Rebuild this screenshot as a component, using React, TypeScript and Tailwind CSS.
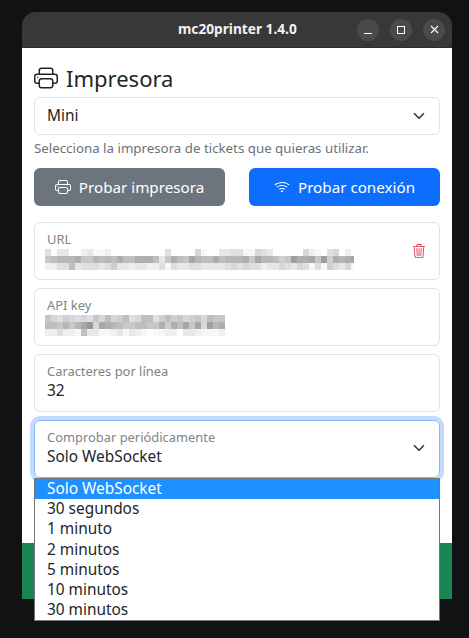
import type { ReactNode } from 'react'
import { BsPrinter, BsWifi, BsTrash3 } from 'react-icons/bs'

// grey levels of the blurred values, one string per row (0 is white, higher is darker)
const urlMosaic = [
  '4033002311200000000040000510033441154300000521045020',
  '78999a779898a88aaa837a87b988a8999a7b99867caab7c6a9ab',
  '2244834443463323322414334433334545442335435414164351',
]
const keyMosaic = [
  '754654547585684588468675675877',
  '887979bd5ba98778877a6a8b7b5c9a',
  '224221833112313210112203321112',
]
const options = ['Solo WebSocket', '30 segundos', '1 minuto', '2 minutos', '5 minutos', '10 minutos', '30 minutos']

function Mosaic({ rows, width }: { rows: string[]; width: number }) {
  return (
    <svg width={width} height={21} className="absolute left-[10px] top-[26px]" shapeRendering="crispEdges">
      {rows.map((row, y) =>
        row.split('').map((c, x) => {
          const g = 255 - (parseInt(c, 16) || 0) * 8
          return <rect key={`${x}-${y}`} x={x * 6} y={y * 7} width={6} height={7} fill={`rgb(${g},${g},${g + 2})`} />
        }),
      )}
    </svg>
  )
}

function Chevron() {
  return (
    <svg width="12" height="12" viewBox="0 0 16 16" fill="none" stroke="#343a40" strokeWidth="2.2" strokeLinecap="round" strokeLinejoin="round">
      <path d="m2 5 6 6 6-6" />
    </svg>
  )
}

function Field({ label, children, right }: { label: string; children?: ReactNode; right?: ReactNode }) {
  return (
    <div className="relative h-[58px] rounded-[6px] border border-[#dee2e6] bg-white px-3 pt-[8px]">
      <div className="text-[12.9px] leading-[17px] text-[#7f8387]">{label}</div>
      {children}
      {right}
    </div>
  )
}

export default function App() {
  return (
    <div className="relative h-[638px] w-[469px] overflow-hidden bg-[#111214] font-['Noto_Sans',sans-serif] text-[#212529]">
      <div className="pl-[22px] pt-3">
        <div className="flex h-[587px] w-[430px] flex-col overflow-hidden rounded-t-[14px]">
          <div className="flex h-[36px] shrink-0 items-center border-b border-[#2c2c2c] bg-[#383838] pl-[156px] pr-[7px]">
            <div className="text-[13.7px] font-bold text-[#f2f2f2]">mc20printer 1.4.0</div>
            <div className="ml-auto flex gap-[11px]">
              <div className="flex h-[22px] w-[22px] items-center justify-center rounded-full bg-[#4a4a4a]">
                <div className="mt-[8px] h-[1px] w-2 bg-white" />
              </div>
              <div className="flex h-[22px] w-[22px] items-center justify-center rounded-full bg-[#4a4a4a]">
                <div className="h-2 w-2 border border-white" />
              </div>
              <div className="flex h-[22px] w-[22px] items-center justify-center rounded-full bg-[#4a4a4a]">
                <svg width="9" height="9" viewBox="0 0 9 9" stroke="white" strokeWidth="1.1">
                  <path d="M1 1l7 7M8 1l-7 7" />
                </svg>
              </div>
            </div>
          </div>

          <div className="flex-1 bg-white px-3 pt-[13px]">
            <div className="flex h-[33px] items-center gap-[8px] text-[22px] leading-none">
              <BsPrinter className="h-[24px] w-[24px]" />
              <span>Impresora</span>
            </div>

            <div className="mt-[3px] flex h-[38px] items-center justify-between rounded-[6px] border border-[#dee2e6] pl-3 pr-[14px] text-[15.4px]">
              <span>Mini</span>
              <Chevron />
            </div>
            <div className="flex h-[33px] items-center whitespace-nowrap pb-[5px] text-[13.3px] text-[#6c7177]">
              Selecciona la impresora de tickets que quieras utilizar.
            </div>

            <div className="flex gap-6">
              <div className="flex h-[38px] flex-1 items-center justify-center gap-2 rounded-[6px] bg-[#6c757d] text-[15.2px] text-white">
                <BsPrinter className="h-4 w-4" />
                <span>Probar impresora</span>
              </div>
              <div className="flex h-[38px] flex-1 items-center justify-center gap-2 rounded-[6px] bg-[#0d6efd] text-[15.2px] text-white">
                <BsWifi className="h-4 w-4" />
                <span>Probar conexión</span>
              </div>
            </div>

            <div className="mt-4 flex flex-col gap-2">
              <Field label="URL" right={<BsTrash3 className="absolute right-[13px] top-[21px] h-[14px] w-[14px] text-[#dc3545]" />}>
                <Mosaic rows={urlMosaic} width={309} />
              </Field>
              <Field label="API key">
                <Mosaic rows={keyMosaic} width={181} />
              </Field>
              <Field label="Caracteres por línea">
                <div className="text-[15.4px] leading-[22px]">32</div>
              </Field>
              <div className="flex h-[58px] items-center justify-between rounded-[6px] border border-[#86b7fe] pl-3 pr-[14px] pb-[2px] shadow-[0_0_0_4px_#c2dbfe]">
                <div>
                  <div className="text-[12.9px] leading-[17px] text-[#7f8387]">Comprobar periódicamente</div>
                  <div className="text-[15.4px] leading-[21px]">Solo WebSocket</div>
                </div>
                <Chevron />
              </div>
            </div>
          </div>

          <div className="h-[56px] shrink-0 bg-[#198754]" />
        </div>
      </div>

      <div className="absolute left-[34px] top-[478px] w-[406px] border border-[#767676] bg-white text-[15.4px] leading-[20.2px]">
        {options.map((o, i) => (
          <div key={o} className={i === 0 ? 'bg-[#1e90ff] pl-3 text-white' : 'pl-3'}>
            {o}
          </div>
        ))}
      </div>
    </div>
  )
}
